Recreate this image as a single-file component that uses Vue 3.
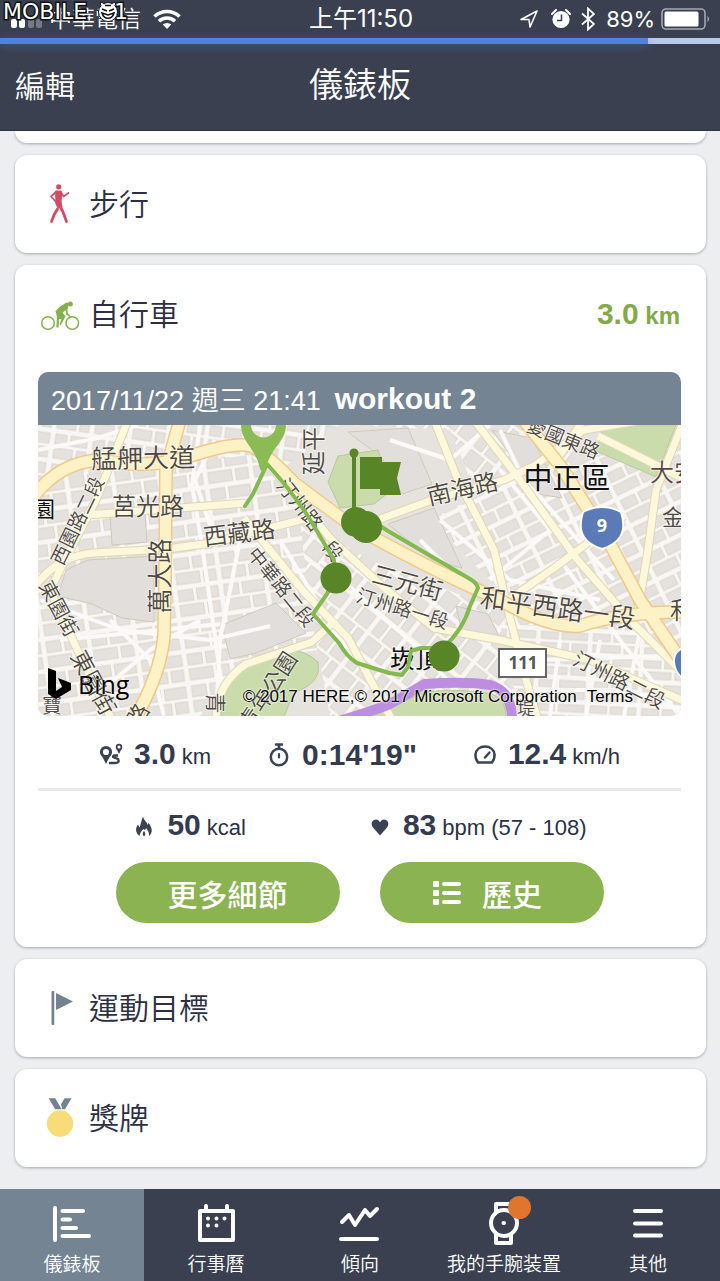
<template>
  <div class="app">
    <header class="top">
      <div class="status-bar">
        <div class="status-left">
          <svg class="signal" viewBox="0 0 31 10" fill="#fff">
            <rect x="0" y="0" width="6" height="9" rx="2" />
            <rect x="8" y="0" width="6" height="9" rx="2" />
            <rect x="17" y="0" width="6" height="9" rx="2" opacity="0.3" />
            <rect x="25" y="0" width="6" height="9" rx="2" opacity="0.3" />
          </svg>
          <span class="carrier">中華電信</span>
          <svg class="wifi" viewBox="0 0 28 20" fill="none" stroke="#fff" stroke-width="3.6">
            <path d="M1.5 7.5a18 18 0 0 1 25 0" />
            <path d="M6 12.3a11.5 11.5 0 0 1 16 0" />
            <path d="M14 20l-4.2-4.4a6 6 0 0 1 8.4 0z" fill="#fff" stroke="none" />
          </svg>
        </div>
        <span class="clock">上午11:50</span>
        <div class="status-right">
          <svg class="arrow" viewBox="0 0 20 20" fill="none" stroke="#fff" stroke-width="1.6">
            <path d="M2 10.5L18 2l-7 16-1-7.5z" stroke-linejoin="round" />
          </svg>
          <svg class="alarm" viewBox="0 0 20 20">
            <circle cx="10" cy="10.5" r="8.6" fill="#fff" />
            <path d="M1 5l4-4M19 5l-4-4" stroke="#fff" stroke-width="2" stroke-linecap="round" />
            <path d="M10.5 5.5v6H6" stroke="#3a4050" stroke-width="1.6" fill="none" />
          </svg>
          <svg class="bluetooth" viewBox="0 0 14 24" fill="none" stroke="#fff" stroke-width="1.8">
            <path d="M1 6.5l12 10.5-6 5.5V1.5L13 7 1 17.5" />
          </svg>
          <span>89%</span>
          <svg class="battery" viewBox="0 0 50 22">
            <rect x="1" y="1" width="43" height="20" rx="4" fill="none" stroke="#a4a8b1" stroke-width="1.6" />
            <rect x="3.5" y="3.5" width="34" height="15" rx="1.5" fill="#fff" />
            <path d="M46.5 7.5q3 3.5 0 7z" fill="#a4a8b1" />
          </svg>
        </div>
        <svg class="watermark" viewBox="0 0 128 24">
          <g class="watermark-text">
            <text x="3" y="19">MOBILE</text>
            <text x="114" y="19">1</text>
          </g>
          <circle cx="108" cy="12" r="9.500" fill="#fff" stroke="#111" />
          <path d="M100 6l1-4 4 2M116 6l-1-4-4 2" fill="#fff" stroke="#111" />
          <path d="M102 9l5 2M114 9l-5 2M102 13c2 7 10 7 12 0l-6 2zM105 5.500h6" fill="none" stroke="#111" stroke-width="1.500" />
        </svg>
      </div>
      <div class="progress">
        <div class="progress-value" :style="{ width: progress + '%' }"></div>
      </div>
      <div class="nav-bar">
        <button class="edit" type="button">編輯</button>
        <h1 class="title">儀錶板</h1>
      </div>
    </header>

    <main class="content">
      <section class="card card-previous"></section>

      <section class="card">
        <div class="card-header">
          <svg class="card-icon" viewBox="0 0 42 42" fill="none" stroke="#d24b66" stroke-linecap="round" stroke-linejoin="round">
            <circle cx="19.700" cy="3.800" r="2.600" fill="#d24b66" stroke="none" />
            <path d="M17 9l-5 4.500 4.500 5M22 9l2.500 4.500 5-3.500" stroke-width="1.700" />
            <path d="M17 8h5l.5 4-.5 7 1 5-4 1-2-4z" fill="#d24b66" stroke-width="1" />
            <path d="M20.500 22l3.500 7 3.500 9.500M18.500 26L15 32l-2.500 6.500" stroke-width="2.800" />
          </svg>
          <h2 class="card-title">步行</h2>
        </div>
      </section>

      <section class="card card-bike">
        <div class="card-header">
          <svg class="card-icon" viewBox="0 0 42 42" fill="none" stroke="#86b04c">
            <circle cx="9" cy="30" r="6.300" stroke-width="1.500" />
            <circle cx="33.300" cy="30" r="6.300" stroke-width="1.500" />
            <circle cx="31.300" cy="11" r="2.500" fill="#86b04c" stroke="none" />
            <path d="M17.500 17l3-3 7-4.500q2 0 2 2.500l-1 4-5 3.500 3 4-5 9-1-.5 2-6-3.500 0z" fill="#86b04c" stroke="none" />
            <path d="M17.500 17.500l1.500 6-.5 11" stroke-width="2.200" />
            <path d="M27.500 15l.5 6 3.500 3" stroke-width="1.600" stroke-linecap="round" />
          </svg>
          <h2 class="card-title">自行車</h2>
          <p class="total"><strong>3.0</strong> km</p>
        </div>

        <article class="workout">
          <div class="workout-header">
            <time datetime="2017-11-22T21:41">2017/11/22 週三 21:41</time>
            <h3 class="workout-name">workout 2</h3>
          </div>
          <div class="map">
            <svg class="map-canvas" viewBox="38 425 643 291" role="img" aria-label="workout 2">
              <defs>
                <pattern
                  v-for="p in patterns"
                  :id="p.id"
                  :key="p.id"
                  :width="p.w"
                  :height="p.h"
                  patternUnits="userSpaceOnUse"
                  :patternTransform="'rotate(' + p.angle + ')'"
                >
                  <rect :width="p.w" :height="p.h" fill="#f8f7f5" />
                  <rect x="2" y="2" :width="p.w * 0.4 - 4" :height="p.h * 0.5 - 5" class="block" />
                  <rect :x="p.w * 0.4 + 2" y="2" :width="p.w * 0.6 - 6" :height="p.h * 0.5 - 5" class="block" />
                  <rect x="2" :y="p.h * 0.5 + 1" :width="p.w * 0.6 - 4" :height="p.h * 0.5 - 5" class="block" />
                  <rect :x="p.w * 0.6 + 2" :y="p.h * 0.5 + 1" :width="p.w * 0.4 - 6" :height="p.h * 0.5 - 5" class="block" />
                </pattern>
              </defs>
              <rect x="38" y="425" width="643" height="291" fill="#e6e3df" />
              <path v-for="(d, i) in districts" :key="'d' + i" :d="d.d" :fill="'url(#' + d.pattern + ')'" />
              <path v-for="(d, i) in openBlocks" :key="'o' + i" :d="d" class="open-block" />
              <path v-for="(d, i) in lanes" :key="'l' + i" :d="d" class="lane" />
              <path v-for="(d, i) in parks" :key="'p' + i" :d="d" class="park" />
              <path v-for="(d, i) in streets" :key="'sc' + i" :d="d" class="street-casing" />
              <path v-for="(d, i) in streets" :key="'s' + i" :d="d" class="street" />
              <path v-for="(d, i) in avenues" :key="'ac' + i" :d="d" class="avenue-casing" />
              <path v-for="(d, i) in avenues" :key="'a' + i" :d="d" class="avenue" />
              <path d="M335 722q30-8 55-18l35-20q40-3 65 1 22 6 22 35" fill="none" stroke="#bd8ee0" stroke-width="10" />

              <text
                v-for="(l, i) in labels"
                :key="'t' + i"
                :class="['label', l.kind]"
                :font-size="l.size"
                :transform="'translate(' + l.x + ' ' + l.y + ') rotate(' + l.angle + ')'"
              >{{ l.text }}</text>

              <path d="M602 507q10 0 19 5 5 16-1 25-5 8-18 12-13-4-18-12-6-9-1-25 9-5 19-5z" fill="#5b7bb8" stroke="#fff" stroke-width="2" />
              <text class="shield" x="602" y="532" font-size="18">9</text>
              <path d="M685 647q-12 4-11 15 1 12 11 18z" fill="#5b7bb8" stroke="#fff" stroke-width="2" />
              <rect x="499" y="649" width="47" height="28" fill="#fff" stroke="#666" stroke-width="2" />
              <text class="shield county" x="523" y="669" font-size="17">111</text>

              <path class="route" d="M245 506l8-12 14-30q22 24 41 52l26 44 1 18-8 16-14 20 26 29q8 14 18 20l32 10 13 2 6-8 3-16 10-3h22q20-18 27-42l8-18q-1-5-8-9l-82-48-28-18" />
              <path d="M241 425c0 17 15 23 19 44q3 5 6 0c4-21 20-27 20-44h-10a12 12 0 0 1-25 0z" fill="#8bbb55" />
              <g fill="#588526">
                <circle cx="336" cy="578" r="15.500" />
                <circle cx="444" cy="656" r="15.500" />
                <ellipse cx="366" cy="527" rx="16" ry="16" />
                <circle cx="356" cy="522" r="15" />
                <circle cx="354" cy="453" r="4.500" />
                <path d="M352 454h4v56h-4zM360 457h22v5h19l-4 16 4 17h-21v-6h-20z" />
              </g>
              <path d="M48 668l8 3v20l6-4-4-9 13 5v7l-15 9-8-5z" fill="#000" />
            </svg>
            <span class="bing">Bing</span>
            <p class="copyright">
              <span>© 2017 HERE,© 2017 Microsoft Corporation</span>
              <a href="#terms">Terms</a>
            </p>
          </div>
        </article>

        <div class="stats stats-main">
          <p class="stat">
            <svg class="stat-icon" viewBox="0 0 24 24" fill="none" stroke="#3a4254">
              <circle cx="7" cy="9" r="4.600" stroke-width="3" />
              <path d="M2 11l5 10 5-10-5 3z" fill="#3a4254" stroke="none" />
              <circle cx="20" cy="4" r="2.400" stroke-width="1.700" />
              <path d="M17.500 6l2.500 5 2.500-5z" fill="#3a4254" stroke="none" />
              <path d="M19 12.500h-4q-2 1 0 2l4 1.500q2 4-3 4h-6" stroke-width="2.400" />
            </svg>
            <strong>3.0</strong> km
          </p>
          <p class="stat">
            <svg class="stat-icon" viewBox="0 0 24 24" fill="none" stroke="#3a4254">
              <circle cx="12" cy="14" r="8.200" stroke-width="2.500" />
              <path d="M9 1.500h6M12 2v3" stroke-width="2.600" stroke-linecap="round" />
              <path d="M12 11v3.500" stroke-width="2.200" stroke-linecap="round" />
            </svg>
            <strong>0:14'19"</strong>
          </p>
          <p class="stat">
            <svg class="stat-icon" viewBox="0 0 24 24" fill="none" stroke="#3a4254">
              <path d="M5 19.500q-3-4-2.500-8C3 6.500 7 3.500 12 3.500s9 3 9.500 8q.5 4-2.500 8z" stroke-width="2.500" stroke-linejoin="round" />
              <path d="M12 14.500l4.500-5" stroke-width="2.400" stroke-linecap="round" />
            </svg>
            <strong>12.4</strong> km/h
          </p>
        </div>
        <div class="stats stats-extra">
          <p class="stat">
            <svg class="stat-icon" viewBox="0 0 24 24">
              <path d="M7.500 21C3.500 18 3 13.500 6 9.500l1.500 3C9 9 9 6 11 1.500c1 4.500 4 5 4.500 8.500l1-2c4 5 4.500 9.500.5 13 .5-3-1-5.500-3-8-.5 2-1.500 2.500-2.500 1-2.500 2-3.500 4-4 7z" fill="#3a4254" />
              <path d="M12 16q2.500 3 0 5.500-2.500-2.500 0-5.500z" fill="#3a4254" />
            </svg>
            <strong>50</strong> kcal
          </p>
          <p class="stat">
            <svg class="stat-icon" viewBox="0 0 24 24">
              <path d="M12 20.500L5 12.500C2 8.500 4.500 4.500 8 4.500c2 0 3.500 1.500 4 3 .5-1.500 2-3 4-3 3.500 0 6 4 3 8z" fill="#3a4254" />
            </svg>
            <strong>83</strong> bpm (57 - 108)
          </p>
        </div>

        <div class="actions">
          <button class="action" type="button">更多細節</button>
          <button class="action" type="button">
            <svg class="list-icon" viewBox="0 0 28 26" fill="#fff">
              <rect x="0" y="1" width="6" height="6" rx="1" />
              <rect x="0" y="10" width="6" height="6" rx="1" />
              <rect x="0" y="19" width="6" height="6" rx="1" />
              <rect x="9" y="2" width="19" height="4" rx="2" />
              <rect x="9" y="11" width="19" height="4" rx="2" />
              <rect x="9" y="20" width="19" height="4" rx="2" />
            </svg>
            歷史
          </button>
        </div>
      </section>

      <section class="card">
        <div class="card-header">
          <svg class="card-icon" viewBox="0 0 42 42" fill="#728291">
            <rect x="12.500" y="4" width="2.800" height="34" rx="1" />
            <path d="M17 6l17 8.500L17 23z" />
          </svg>
          <h2 class="card-title">運動目標</h2>
        </div>
      </section>

      <section class="card">
        <div class="card-header">
          <svg class="card-icon" viewBox="0 0 42 42" fill="#728291">
            <path d="M9.700 1.300h6.500l6.500 11h-6.500zM25.500 1.300h7l-6.500 11h-2.700l-1.300-5z" />
            <circle cx="21" cy="26.500" r="13.200" fill="#f7dc77" />
          </svg>
          <h2 class="card-title">獎牌</h2>
        </div>
      </section>
    </main>

    <nav class="tab-bar">
      <button
        v-for="tab in tabs"
        :key="tab.id"
        type="button"
        :class="['tab', { active: tab.id === activeTab }]"
        @click="activeTab = tab.id"
      >
        <span class="tab-icon">
          <svg viewBox="0 0 48 48" fill="none" stroke="#fff" stroke-width="4" stroke-linecap="round" stroke-linejoin="round">
            <path :d="tab.icon" />
            <path v-if="tab.dots" :d="tab.dots" />
          </svg>
          <span v-if="tab.badge" class="badge"></span>
        </span>
        <span class="tab-label">{{ tab.label }}</span>
      </button>
    </nav>
  </div>
</template>

<script setup>
import { ref } from 'vue';

const progress = 90;
const activeTab = ref('dashboard');

const tabs = [
  { id: 'dashboard', label: '儀錶板', icon: 'M7 8v32M14.500 11H35M14.500 19.500h7.500M14.500 28H28M14.500 36H41' },
  {
    id: 'calendar',
    label: '行事曆',
    icon: 'M8 11h33v29H8zM14 6v5M35 6v5',
    dots: 'M16 18.500h.01M24.500 18.500h.01M32.500 18.500h.01M16 25.500h.01M24.500 25.500h.01'
  },
  { id: 'trend', label: '傾向', icon: 'M6 22l7-7 6 10 10-15 5 6 7-7M5 39h36' },
  {
    id: 'device',
    label: '我的手腕装置',
    icon: 'M16 12V4h15v8M16 35v8h15v-8M37 23a13 13 0 1 1-26 0 13 13 0 1 1 26 0z',
    dots: 'M23.500 23h.5',
    badge: true
  },
  { id: 'more', label: '其他', icon: 'M11 11h26M11 23.500h26M11 35.500h26' }
];

// street grids, one per direction that the blocks follow
const patterns = [
  { id: 'grid-west', w: 46, h: 32, angle: -8 },
  { id: 'grid-north', w: 38, h: 30, angle: 8 },
  { id: 'grid-diagonal', w: 34, h: 42, angle: 38 },
  { id: 'grid-east', w: 48, h: 30, angle: -26 },
  { id: 'grid-south', w: 52, h: 24, angle: 3 }
];

const districts = [
  { pattern: 'grid-north', d: 'M38 425H340L280 470 160 480 38 500z' },
  { pattern: 'grid-west', d: 'M38 480L250 455 330 530 300 600 180 716H38z' },
  { pattern: 'grid-west', d: 'M165 550L290 530 345 600 320 650 240 660 200 716H150z' },
  { pattern: 'grid-diagonal', d: 'M300 520L370 560 500 610 540 716H330L310 610z' },
  { pattern: 'grid-diagonal', d: 'M350 425H560L640 590 520 600 450 430z' },
  { pattern: 'grid-east', d: 'M430 520L530 470 681 440V716H520L500 590z' },
  { pattern: 'grid-south', d: 'M500 625L640 625 681 660V716H520z' }
];

const openBlocks = [
  'M66 570l22-10 66-4v66l-32-4-30-14-34-8z',
  'M110 512h35l2 30-35 3z',
  'M222 625l54-22 30 30-50 20-26 6z',
  'M388 524l46-16 28 60-30-8z',
  'M492 430l40 8 30 60-24-4z',
  'M348 432l60-4 24 56-30 10-20-36z',
  'M456 606l32 8 12 24-38-6z'
];

const parks = [
  'M222 722q-4-40 30-62 40-22 66 2 4 22-24 30l-12 30z',
  'M328 482l10-26 40-6 14 40-18 14-34 4z',
  'M604 425h72l-20 52-60-26z',
  'M348 722l42-14 34-16q40-4 68 2 16 6 14 28z'
];

const lanes = [
  'M38 450l60-12 40-13M200 425l-8 60 10 60 24 171',
  'M40 600l80 30 90 10 60-14M60 640l100-10 60-6',
  'M110 620l40 40 14 56M90 700l60-50 50-30',
  'M215 440l-20 40 20 60M240 540l-20 100-4 76',
  'M280 540l60 100 60 76M320 560l100 90 60 66',
  'M420 540l50 50 40 0M440 520l70 60 90 20',
  'M500 430l24 50 90 100M560 560l60 80 60 76',
  'M560 640l-10 76M600 640l-14 76M640 630l-16 86',
  'M530 690h100l51 20M540 660l120-4',
  'M390 440l60 20 40-35M500 470l50 60-60 50'
];

const streets = [
  'M128 420L96 500 60 570 50 590 82 660 112 720',
  'M86 515l80-6 80-6',
  'M34 588q22-32 60-35l72-4 46-6 100-26',
  'M244 518l60 74 44 46 44 82',
  'M274 470l56 68 52 48 52 42 66 12 90 20 96 42',
  'M372 522l60-22 72-20 30-14 50-36 60-10',
  'M434 420l24 60 36 70 14 60 18 70 12 40',
  'M474 420l46 60 56 78 54 62 60 60',
  'M598 436l88 44M684 420l-28 70-8 60-10 60',
  'M500 606l54-38 70-52M590 410l-40 60',
  'M216 720q0-36 30-56l66-22 24-22'
];

const avenues = [
  'M34 496q26-34 66-36 50 10 90-4 50-16 64-9 22 16 40 36l54 40q70 40 126 65l26 12q48 28 80 26 40-14 106-14',
  'M180 420l-14 50-1 110-1 56q-4 40-30 84',
  'M522 418l40 50 48 76 30 56 50 74'
];

const labels = [
  { text: '艋舺大道', x: 143, y: 456, size: 26, angle: -1 },
  { text: '莒光路', x: 148, y: 504, size: 24, angle: 0 },
  { text: '西藏路', x: 239, y: 531, size: 24, angle: -7 },
  { text: '西園路二段', x: 76, y: 520, size: 19, angle: -64 },
  { text: '萬大路', x: 158, y: 576, size: 25, angle: -90 },
  { text: '東園街', x: 60, y: 608, size: 20, angle: 62 },
  { text: '東園街', x: 95, y: 682, size: 23, angle: 62 },
  { text: '延平', x: 311, y: 451, size: 24, angle: -90 },
  { text: '汀州路', x: 301, y: 504, size: 20, angle: 52 },
  { text: '段', x: 334, y: 550, size: 19, angle: 52 },
  { text: '中華路二段', x: 283, y: 586, size: 19, angle: 51 },
  { text: '三元街', x: 408, y: 581, size: 24, angle: 15 },
  { text: '汀州路一段', x: 403, y: 607, size: 19, angle: 17 },
  { text: '南海路', x: 462, y: 487, size: 24, angle: -13 },
  { text: '愛國東路', x: 564, y: 437, size: 19, angle: 22 },
  { text: '中正區', x: 567, y: 476, size: 29, angle: 0, kind: 'district' },
  { text: '大安', x: 674, y: 470, size: 24, angle: 0, kind: 'place' },
  { text: '金', x: 673, y: 515, size: 22, angle: 0 },
  { text: '和平西路一段', x: 558, y: 606, size: 26, angle: 8 },
  { text: '和', x: 682, y: 608, size: 24, angle: 0 },
  { text: '汀州路二段', x: 620, y: 679, size: 20, angle: 27 },
  { text: '崁頂', x: 415, y: 657, size: 25, angle: 0, kind: 'district' },
  { text: '青年公園', x: 266, y: 690, size: 22, angle: -57 },
  { text: '青', x: 217, y: 703, size: 21, angle: 90 },
  { text: '園', x: 44, y: 507, size: 22, angle: 0, kind: 'district' },
  { text: '寶', x: 52, y: 704, size: 20, angle: 0 },
  { text: '路', x: 136, y: 714, size: 22, angle: -60 },
  { text: '堤', x: 526, y: 707, size: 18, angle: 0 }
];
</script>

<style>
body {
  margin: 0;
  background: #edeef0;
}
</style>

<style scoped>
.app {
  display: flex;
  flex-direction: column;
  min-height: 100vh;
  font-family: "Liberation Sans", "Noto Sans CJK TC", sans-serif;
  color: #2d3044;
  background: #edeef0;
  overflow: hidden;
}

button {
  font-family: inherit;
  border: none;
  padding: 0;
  cursor: pointer;
}

h1,
h2,
h3,
p {
  margin: 0;
}

.top {
  position: relative;
  z-index: 1;
  background: #3a4050;
  color: #ffffff;
  border-bottom: 1px solid #2c3140;
}

.status-bar {
  position: relative;
  display: grid;
  grid-template-columns: 1fr auto 1fr;
  align-items: center;
  height: 38px;
  padding: 0 9px 0 11px;
  font-family: Inter, "Noto Sans CJK TC", sans-serif;
  font-size: 23px;
  line-height: 38px;
}

.status-left,
.status-right {
  display: flex;
  align-items: center;
}

.status-right {
  justify-content: flex-end;
  gap: 6px;
  font-size: 22px;
}

.clock {
  font-size: 24px;
  font-weight: 400;
}

.signal {
  width: 31px;
  height: 10px;
  margin: 10px 7px 0 0;
}

.carrier {
  font-weight: 350;
}

.wifi {
  width: 28px;
  height: 20px;
  margin-left: 12px;
}

.arrow {
  width: 20px;
  height: 20px;
  margin-right: 6px;
}

.alarm {
  width: 20px;
  height: 20px;
  margin-right: 4px;
}

.bluetooth {
  width: 14px;
  height: 24px;
  margin-right: 5px;
}

.battery {
  width: 50px;
  height: 22px;
}

.watermark {
  position: absolute;
  top: 0;
  left: 0;
  width: 128px;
  height: 24px;
}

.watermark-text {
  font-family: "DejaVu Sans", sans-serif;
  font-size: 22px;
  font-weight: 400;
  fill: #ffffff;
  stroke: #111111;
  stroke-width: 3px;
  paint-order: stroke;
}

.progress {
  position: relative;
  z-index: 1;
  height: 6px;
  background: #b9c9e8;
}

.progress-value {
  height: 100%;
  background: #5180df;
  box-shadow: 0 2px 8px rgba(81, 128, 223, 0.4);
}

.nav-bar {
  display: grid;
  grid-template-columns: 1fr auto 1fr;
  align-items: center;
  height: 86px;
  padding: 0 15px;
  box-sizing: border-box;
}

.edit {
  justify-self: start;
  background: none;
  color: #ffffff;
  font-size: 30px;
  font-weight: 350;
  line-height: 40px;
}

.title {
  font-size: 34px;
  font-weight: 350;
  line-height: 44px;
  padding-bottom: 4px;
}

.content {
  flex: 1;
  display: flex;
  flex-direction: column;
  gap: 12px;
  padding: 0 14px 21px 15px;
}

.card {
  background: #ffffff;
  border-radius: 12px;
  box-shadow: 0 1px 3px rgba(60, 66, 84, 0.4);
}

.card-previous {
  height: 12px;
  border-radius: 0 0 12px 12px;
}

.card-bike {
  padding-bottom: 24px;
}

.card-header {
  display: flex;
  align-items: center;
  gap: 8px;
  height: 98px;
  padding: 0 26px 0 24px;
}

.card-icon {
  width: 42px;
  height: 42px;
}

.card-title {
  padding-top: 2px;
  font-size: 30px;
  font-weight: 350;
  line-height: 40px;
}

.total {
  margin-left: auto;
  padding-top: 2px;
  color: #84a94a;
  font-size: 24px;
  font-weight: 700;
  line-height: 40px;
}

.total strong {
  font-size: 30px;
}

.workout {
  margin: 9px 25px 0 23px;
  border-radius: 10px;
  overflow: hidden;
}

.workout-header {
  display: flex;
  align-items: center;
  gap: 14px;
  height: 53px;
  padding: 0 13px;
  background: #748493;
  color: #ffffff;
  font-size: 27px;
  font-weight: 350;
}

.workout-name {
  font-size: 30px;
  font-weight: 700;
}

.map {
  position: relative;
}

.map-canvas {
  display: block;
  width: 100%;
}

.block {
  fill: #e5e1de;
  stroke: #dcd6c8;
  stroke-width: 1px;
}

.open-block {
  fill: #e2dedc;
  stroke: #d2cab8;
  stroke-width: 1px;
}

.park {
  fill: #cbdcac;
  stroke: #b9c99b;
  stroke-width: 1px;
}

.lane,
.street,
.street-casing,
.avenue,
.avenue-casing {
  fill: none;
  stroke-linejoin: round;
}

.lane {
  stroke: #fbfaf8;
  stroke-width: 4px;
}

.street-casing {
  stroke: #e0d6b5;
  stroke-width: 9px;
}

.street {
  stroke: #fdf8dc;
  stroke-width: 7px;
}

.avenue-casing {
  stroke: #f0c98a;
  stroke-width: 14px;
}

.avenue {
  stroke: #fdf2c6;
  stroke-width: 11px;
}

.route {
  fill: none;
  stroke: #84b850;
  stroke-width: 4px;
  stroke-linejoin: round;
  stroke-linecap: round;
}

.label {
  font-family: "Noto Sans CJK TC", sans-serif;
  font-weight: 350;
  fill: #4d483f;
  stroke: rgba(255, 255, 255, 0.5);
  stroke-width: 2px;
  paint-order: stroke;
  text-anchor: middle;
  dominant-baseline: central;
}

.district {
  font-weight: 400;
  fill: #111111;
}

.place {
  fill: #5b4540;
}

.shield {
  font-family: "Noto Sans", sans-serif;
  font-weight: 700;
  fill: #ffffff;
  text-anchor: middle;
}

.county {
  fill: #555555;
}

.bing {
  position: absolute;
  left: 40px;
  bottom: 16px;
  color: #000000;
  font-family: "Open Sans", sans-serif;
  font-size: 25px;
  line-height: 32px;
  text-shadow: 0 0 2px #ffffff;
}

.copyright {
  position: absolute;
  right: 48px;
  bottom: 9px;
  display: flex;
  gap: 10px;
  color: #000000;
  font-size: 17px;
  line-height: 20px;
  white-space: nowrap;
  text-shadow: 0 0 2px #ffffff, 0 0 2px #ffffff;
}

.copyright a {
  color: inherit;
  text-decoration: none;
}

.stats {
  display: flex;
  justify-content: center;
  align-items: center;
  margin: 0 25px 0 23px;
  font-size: 22px;
}

.stats-main {
  gap: 56px;
  height: 66px;
  padding-top: 6px;
  border-bottom: 3px solid #e9e9eb;
}

.stats-extra {
  gap: 122px;
  height: 71px;
}

.stat {
  display: flex;
  align-items: baseline;
  gap: 6px;
  line-height: 36px;
}

.stat strong {
  color: #343b4e;
  font-size: 30px;
}

.stat-icon {
  align-self: center;
  width: 24px;
  height: 24px;
  margin-right: 5px;
}

.actions {
  display: flex;
  justify-content: center;
  gap: 40px;
  margin: 0 25px 0 23px;
}

.action {
  display: flex;
  align-items: center;
  justify-content: center;
  gap: 21px;
  width: 224px;
  height: 61px;
  padding: 0 8px 0 0;
  border-radius: 31px;
  background: #8bb351;
  color: #ffffff;
  font-size: 30px;
  font-weight: 500;
}

.action:first-child {
  padding: 0;
}

.list-icon {
  width: 28px;
  height: 26px;
}

.tab-bar {
  display: grid;
  grid-template-columns: repeat(5, 1fr);
  background: #3a4050;
}

.tab {
  display: flex;
  flex-direction: column;
  align-items: center;
  gap: 3px;
  padding: 11px 0 2px;
  background: none;
  color: #ffffff;
}

.tab.active {
  background: #748493;
}

.tab-icon {
  position: relative;
  width: 48px;
  height: 48px;
}

.badge {
  position: absolute;
  top: -4px;
  right: -3px;
  width: 23px;
  height: 23px;
  border-radius: 50%;
  background: #e0762d;
}

.tab-label {
  font-size: 19px;
  font-weight: 350;
  line-height: 28px;
  white-space: nowrap;
}
</style>
